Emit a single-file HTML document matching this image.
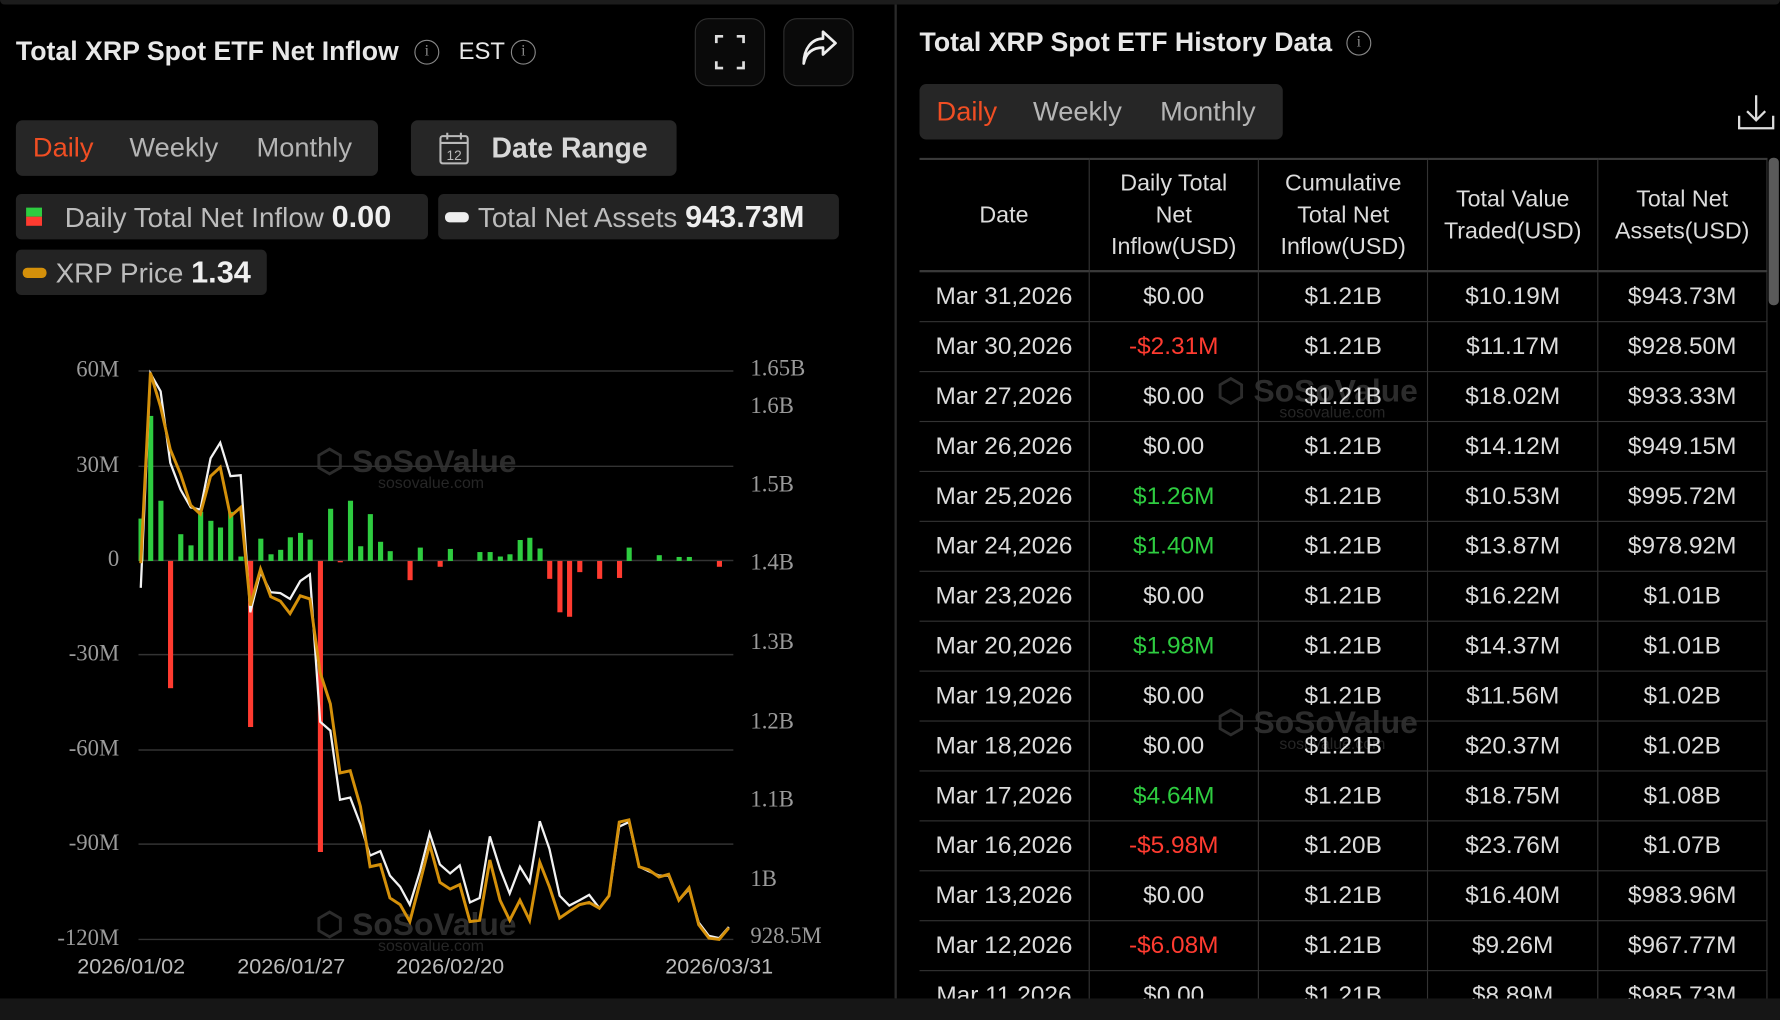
<!DOCTYPE html>
<html><head><meta charset="utf-8"><style>
*{margin:0;padding:0;box-sizing:border-box}
html,body{width:1780px;height:1020px;background:#000;overflow:hidden;font-family:"Liberation Sans",sans-serif}
.s{position:absolute;left:0;top:0;width:1568px;height:899px;transform:scale(1.13520,1.13459);transform-origin:0 0;background:#000;color:#e6e6e6}
.a{position:absolute}
.title{font-size:23.5px;font-weight:bold;color:#e8e8e8;white-space:nowrap}
.info{position:absolute;width:22px;height:22px;border:1.5px solid #888;border-radius:50%;color:#888;font-size:14px;text-align:center;line-height:19px;font-family:"Liberation Serif",serif}
.btn{position:absolute;border:1.5px solid #2e2e2e;border-radius:12px;background:#0a0a0a}
.tabs{position:absolute;background:#262626;border-radius:6px;font-size:24px;color:#b5b5b5}
.tabs span{position:absolute;top:11px}
.chip{position:absolute;background:#232323;border-radius:5px;height:40px;font-size:24.5px;color:#bcbcbc;white-space:nowrap;line-height:40px}
.chip b{color:#efefef;font-size:27px}
.yl{position:absolute;font-family:"Liberation Serif",serif;font-size:20px;color:#9a9a9a;white-space:nowrap}
.xl{position:absolute;font-size:19px;color:#bbb;white-space:nowrap;top:842px}
table{border-collapse:collapse;position:absolute;left:810px;top:139px;width:747px;font-size:21.5px;color:#dcdcdc;table-layout:fixed}
td,th{border:1px solid #333;text-align:center;font-weight:normal;height:44px;white-space:nowrap}
th{height:99px;line-height:28px;font-size:20.5px}
tr.h th{border-top:2px solid #3a3a3a;border-bottom:2px solid #3a3a3a}
td:first-child,th:first-child{border-left:none}
.r{color:#ff3b30}.g{color:#2ecc40}
.wm{position:absolute;color:#2c2c2c;font-weight:bold;font-size:28px;white-space:nowrap}
.wm i{display:block;font-style:normal;font-weight:normal;font-size:14px;color:#262626;margin-top:-6px}
</style></head><body><div class="s">
<div class="a" style="left:0;top:0;width:1568px;height:4px;background:#1c1c1c;border-radius:0 0 6px 6px"></div>
<div class="a" style="left:788px;top:4px;width:2px;height:876px;background:#2a2a2a"></div>
<div class="a" style="left:0;top:880px;width:1568px;height:19px;background:#161616"></div>

<div class="title a" style="left:14px;top:32px">Total XRP Spot ETF Net Inflow</div>
<div class="info" style="left:365px;top:35px">i</div>
<div class="a" style="left:404px;top:34px;font-size:21px;color:#e8e8e8">EST</div>
<div class="info" style="left:450px;top:35px">i</div>
<div class="btn" style="left:612px;top:16px;width:62px;height:60px">
<svg width="62" height="60" style="position:absolute;left:-1px;top:-1px"><path d="M19 22v-6h6M37 16h6v6M43 38v6h-6M25 44h-6v-6" stroke="#ddd" stroke-width="2.4" fill="none"/></svg></div>
<div class="btn" style="left:690px;top:16px;width:62px;height:60px">
<svg width="62" height="60" style="position:absolute;left:-1px;top:-1px"><path d="M18 40c2-10 8-14 17-14v6l11-10-11-10v6c-10 0-17 9-17 22z" stroke="#eee" stroke-width="2.4" fill="none" stroke-linejoin="round"/></svg></div>

<div class="tabs" style="left:14px;top:106px;width:319px;height:49px"><span style="left:15px;color:#f04e23">Daily</span><span style="left:100px">Weekly</span><span style="left:212px">Monthly</span></div>
<div class="tabs" style="left:362px;top:106px;width:234px;height:49px"><svg width="30" height="32" style="position:absolute;left:24px;top:9px"><rect x="2" y="5" width="24" height="24" rx="2" stroke="#bbb" stroke-width="1.8" fill="none"/><path d="M2 11h24M8 2v6M20 2v6" stroke="#bbb" stroke-width="1.8"/><text x="14" y="26" font-size="12" fill="#bbb" text-anchor="middle" font-family="Liberation Sans">12</text></svg><span style="left:71px;color:#d8d8d8;font-weight:bold;font-size:25px">Date Range</span></div>

<div class="chip" style="left:14px;top:171px;width:363px"><span class="a" style="left:9px;top:12px;width:14px;height:8px;background:#2ecc40"></span><span class="a" style="left:9px;top:20px;width:14px;height:8px;background:#ff3b30"></span><span style="position:absolute;left:43px">Daily Total Net Inflow <b>0.00</b></span></div>
<div class="chip" style="left:386px;top:171px;width:353px"><span class="a" style="left:6px;top:16px;width:21px;height:9px;background:#eee;border-radius:4px"></span><span style="position:absolute;left:35px">Total Net Assets <b>943.73M</b></span></div>
<div class="chip" style="left:14px;top:220px;width:221px"><span class="a" style="left:6px;top:16px;width:21px;height:9px;background:#d4900a;border-radius:4px"></span><span style="position:absolute;left:35px">XRP Price <b>1.34</b></span></div>

<div class="wm" style="left:278px;top:390px">⬡ SoSoValue<i style="margin-left:55px">sosovalue.com</i></div>
<div class="wm" style="left:278px;top:798px">⬡ SoSoValue<i style="margin-left:55px">sosovalue.com</i></div>

<svg class="a" style="left:0;top:0" width="790" height="880">
<g stroke="#333" stroke-width="1.3"><line x1="122" x2="646" y1="327" y2="327"/><line x1="122" x2="646" y1="411" y2="411"/><line x1="122" x2="646" y1="494" y2="494"/><line x1="122" x2="646" y1="577" y2="577"/><line x1="122" x2="646" y1="661" y2="661"/><line x1="122" x2="646" y1="744" y2="744"/><line x1="122" x2="646" y1="828" y2="828"/></g>
<g transform="translate(0,282) scale(0.5,0.3934)">
<g fill="#2ecc40">
<rect x="244" y="445" width="9" height="95"/><rect x="261" y="215" width="9" height="325"/><rect x="279" y="405" width="9" height="135"/><rect x="314" y="480" width="9" height="60"/><rect x="332" y="505" width="9" height="35"/><rect x="349" y="430" width="9" height="110"/><rect x="367" y="450" width="9" height="90"/><rect x="384" y="465" width="9" height="75"/><rect x="402" y="430" width="9" height="110"/><rect x="420" y="530" width="9" height="10"/><rect x="455" y="490" width="9" height="50"/><rect x="473" y="525" width="9" height="15"/><rect x="490" y="515" width="9" height="25"/><rect x="507" y="487" width="9" height="53"/><rect x="525" y="477" width="9" height="63"/><rect x="542" y="492" width="9" height="48"/><rect x="578" y="423" width="9" height="117"/><rect x="613" y="405" width="9" height="135"/><rect x="631" y="507" width="9" height="33"/><rect x="648" y="435" width="9" height="105"/><rect x="666" y="497" width="9" height="43"/><rect x="683" y="518" width="9" height="22"/><rect x="736" y="510" width="9" height="30"/><rect x="789" y="513" width="9" height="27"/><rect x="841" y="520" width="9" height="20"/><rect x="859" y="520" width="9" height="20"/><rect x="877" y="530" width="9" height="10"/><rect x="894" y="525" width="9" height="15"/><rect x="912" y="493" width="9" height="47"/><rect x="929" y="488" width="9" height="52"/><rect x="947" y="512" width="9" height="28"/><rect x="1104" y="510" width="9" height="30"/><rect x="1157" y="527" width="9" height="13"/><rect x="1192" y="531" width="9" height="9"/><rect x="1210" y="531" width="9" height="9"/>
</g>
<g fill="#ff3b30">
<rect x="296" y="540" width="9" height="285"/><rect x="437" y="540" width="9" height="372"/><rect x="560" y="540" width="9" height="652"/><rect x="595" y="540" width="9" height="3"/><rect x="718" y="540" width="9" height="43"/><rect x="771" y="540" width="9" height="13"/><rect x="964" y="540" width="9" height="40"/><rect x="982" y="540" width="9" height="115"/><rect x="999" y="540" width="9" height="125"/><rect x="1017" y="540" width="9" height="25"/><rect x="1052" y="540" width="9" height="40"/><rect x="1087" y="540" width="9" height="38"/><rect x="1263" y="540" width="9" height="13"/>
</g>
<polyline fill="none" stroke="#f2f2f2" stroke-width="2" vector-effect="non-scaling-stroke" points="248,600 265,120 283,160 300,320 318,380 336,420 353,425 371,310 388,275 406,350 424,348 441,655 459,565 477,610 494,612 511,625 529,585 546,570 564,900 582,920 599,1075 617,1070 635,1130 652,1200 670,1190 687,1245 705,1270 722,1310 740,1235 757,1150 775,1220 793,1240 810,1222 828,1305 845,1295 863,1157 881,1230 898,1285 916,1225 933,1260 951,1123 968,1185 986,1290 1003,1312 1021,1300 1038,1288 1056,1318 1073,1290 1091,1135 1108,1125 1126,1225 1143,1235 1161,1245 1178,1245 1196,1300 1214,1275 1231,1350 1249,1380 1267,1385 1284,1360"/>
<polyline fill="none" stroke="#d4900a" stroke-width="2.6" vector-effect="non-scaling-stroke" points="248,545 265,118 283,195 300,290 318,345 336,415 353,435 371,350 388,330 406,440 424,420 441,640 459,558 477,620 494,630 511,658 529,618 546,625 564,790 582,860 599,1015 617,1010 635,1090 652,1225 670,1220 687,1295 705,1310 722,1348 740,1260 757,1175 775,1260 793,1275 810,1265 828,1348 845,1345 863,1210 881,1300 898,1345 916,1300 933,1345 951,1215 968,1270 986,1340 1003,1325 1021,1310 1038,1305 1056,1318 1073,1290 1091,1125 1108,1120 1126,1225 1143,1232 1161,1248 1178,1242 1196,1300 1214,1272 1231,1355 1249,1385 1267,1388 1284,1362"/>
</g></svg>
<div class="yl" style="right:1463px;top:315px">60M</div>
<div class="yl" style="right:1463px;top:399px">30M</div>
<div class="yl" style="right:1463px;top:482px">0</div>
<div class="yl" style="right:1463px;top:565px">-30M</div>
<div class="yl" style="right:1463px;top:649px">-60M</div>
<div class="yl" style="right:1463px;top:732px">-90M</div>
<div class="yl" style="right:1463px;top:816px">-120M</div>
<div class="yl" style="left:661px;top:314px">1.65B</div>
<div class="yl" style="left:661px;top:347px">1.6B</div>
<div class="yl" style="left:661px;top:416px">1.5B</div>
<div class="yl" style="left:661px;top:485px">1.4B</div>
<div class="yl" style="left:661px;top:555px">1.3B</div>
<div class="yl" style="left:661px;top:625px">1.2B</div>
<div class="yl" style="left:661px;top:694px">1.1B</div>
<div class="yl" style="left:661px;top:764px">1B</div>
<div class="yl" style="left:661px;top:814px">928.5M</div>
<div class="xl" style="left:68px">2026/01/02</div>
<div class="xl" style="left:209px">2026/01/27</div>
<div class="xl" style="left:349px">2026/02/20</div>
<div class="xl" style="left:586px">2026/03/31</div>

<div class="title a" style="left:810px;top:24px">Total XRP Spot ETF History Data</div>
<div class="info" style="left:1186px;top:27px">i</div>
<div class="tabs" style="left:810px;top:74px;width:320px;height:49px"><span style="left:15px;color:#f04e23">Daily</span><span style="left:100px">Weekly</span><span style="left:212px">Monthly</span></div>
<svg class="a" style="left:1530px;top:82px" width="34" height="34"><path d="M17 2v22M9 16l8 8 8-8M2 20v11h30V20" stroke="#ddd" stroke-width="2" fill="none"/></svg>
<div class="wm" style="left:1072px;top:328px">⬡ SoSoValue<i style="margin-left:55px">sosovalue.com</i></div>
<div class="wm" style="left:1072px;top:620px">⬡ SoSoValue<i style="margin-left:55px">sosovalue.com</i></div>
<div class="a" style="left:810px;top:139px;width:747px;height:741px;overflow:hidden">
<table style="left:0;top:0">
<tr class="h"><th>Date</th><th>Daily Total<br>Net<br>Inflow(USD)</th><th>Cumulative<br>Total Net<br>Inflow(USD)</th><th>Total Value<br>Traded(USD)</th><th>Total Net<br>Assets(USD)</th></tr>
<tr><td>Mar 31,2026</td><td>$0.00</td><td>$1.21B</td><td>$10.19M</td><td>$943.73M</td></tr>
<tr><td>Mar 30,2026</td><td class="r">-$2.31M</td><td>$1.21B</td><td>$11.17M</td><td>$928.50M</td></tr>
<tr><td>Mar 27,2026</td><td>$0.00</td><td>$1.21B</td><td>$18.02M</td><td>$933.33M</td></tr>
<tr><td>Mar 26,2026</td><td>$0.00</td><td>$1.21B</td><td>$14.12M</td><td>$949.15M</td></tr>
<tr><td>Mar 25,2026</td><td class="g">$1.26M</td><td>$1.21B</td><td>$10.53M</td><td>$995.72M</td></tr>
<tr><td>Mar 24,2026</td><td class="g">$1.40M</td><td>$1.21B</td><td>$13.87M</td><td>$978.92M</td></tr>
<tr><td>Mar 23,2026</td><td>$0.00</td><td>$1.21B</td><td>$16.22M</td><td>$1.01B</td></tr>
<tr><td>Mar 20,2026</td><td class="g">$1.98M</td><td>$1.21B</td><td>$14.37M</td><td>$1.01B</td></tr>
<tr><td>Mar 19,2026</td><td>$0.00</td><td>$1.21B</td><td>$11.56M</td><td>$1.02B</td></tr>
<tr><td>Mar 18,2026</td><td>$0.00</td><td>$1.21B</td><td>$20.37M</td><td>$1.02B</td></tr>
<tr><td>Mar 17,2026</td><td class="g">$4.64M</td><td>$1.21B</td><td>$18.75M</td><td>$1.08B</td></tr>
<tr><td>Mar 16,2026</td><td class="r">-$5.98M</td><td>$1.20B</td><td>$23.76M</td><td>$1.07B</td></tr>
<tr><td>Mar 13,2026</td><td>$0.00</td><td>$1.21B</td><td>$16.40M</td><td>$983.96M</td></tr>
<tr><td>Mar 12,2026</td><td class="r">-$6.08M</td><td>$1.21B</td><td>$9.26M</td><td>$967.77M</td></tr>
<tr><td>Mar 11,2026</td><td>$0.00</td><td>$1.21B</td><td>$8.89M</td><td>$985.73M</td></tr>
</table></div>
<div class="a" style="left:1558px;top:139px;width:9px;height:130px;background:#5a5a5a;border-radius:4px"></div>
</div></body></html>
